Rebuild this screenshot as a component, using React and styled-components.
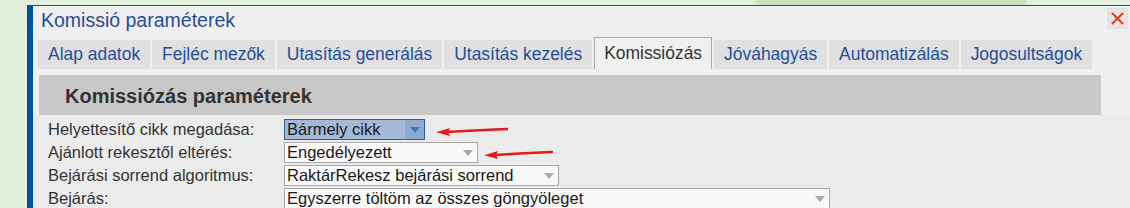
import React from 'react'
import styled, { createGlobalStyle } from 'styled-components'

const GlobalStyle = createGlobalStyle`
  html, body {
    margin: 0;
    padding: 0;
    height: 208px;
    overflow: hidden;
    background: linear-gradient(
      to right,
      #e3efdc 0,
      #e3efdc 752px,
      #c9e2c0 758px,
      #c9e2c0 1025px,
      #e3efdc 1027px
    );
    font-family: Arial, "Liberation Sans", sans-serif;
  }
`

const Page = styled.div`
  padding: 5px 0 0 27px;
  height: 208px;
  box-sizing: border-box;
`

const Window = styled.div`
  box-sizing: border-box;
  height: 100%;
  border-top: 1px solid #1b4f8d;
  border-left: 6px solid #0050a0;
  background: #efefef;
  display: flex;
  flex-direction: column;
  overflow: hidden;
`

const TitleBar = styled.div`
  flex: none;
  display: flex;
  justify-content: space-between;
  align-items: flex-start;
  height: 29px;
  padding: 2px 2px 0 8px;
`

const Title = styled.div`
  font-size: 19.5px;
  line-height: 24px;
  color: #1f4e9a;
`

const CloseButton = styled.div`
  width: 21px;
  height: 21px;
  background: #e3e3e3;
  display: flex;
  align-items: center;
  justify-content: center;
`

const Tabs = styled.div`
  flex: none;
  display: flex;
  align-items: flex-end;
  gap: 2px;
  padding-left: 5px;
  height: 32px;
`

const Tab = styled.div`
  box-sizing: border-box;
  height: ${p => (p.$active ? '32px' : '29px')};
  padding: 0 ${p => (p.$active ? '9px' : '10px')};
  font-size: 17.45px;
  line-height: ${p => (p.$active ? '30px' : '29px')};
  white-space: nowrap;
  color: ${p => (p.$active ? '#333' : '#1f4f9d')};
  background: ${p => (p.$active ? '#f0f0f0' : '#e0e0e0')};
  border: ${p => (p.$active ? '1px solid #aaa' : 'none')};
  border-bottom: none;
`

const SectionHeader = styled.div`
  flex: none;
  margin: 6px 29px 0 6px;
  height: 40px;
  background: #c8c8c8;
  padding-left: 26px;
  font-size: 20px;
  font-weight: bold;
  line-height: 42px;
  color: #333;
`

const Content = styled.div`
  flex: 1 0 auto;
  background: #ebebeb;
  padding: 4px 0 0 15px;
  display: grid;
  grid-template-columns: 236px 1fr;
  grid-auto-rows: 21px;
  row-gap: 2px;
`

const Label = styled.div`
  font-size: 16.5px;
  line-height: 21px;
  color: #333;
  white-space: nowrap;
`

const Field = styled.div`
  display: flex;
  align-items: center;
`

const Select = styled.div`
  box-sizing: border-box;
  width: ${p => p.$width}px;
  height: 21px;
  display: flex;
  align-items: stretch;
  border: 1px solid ${p => (p.$focused ? '#2e5f9a' : '#a9a9a9')};
  background: ${p => (p.$focused ? '#a3b9d6' : '#f8f8f8')};
`

const SelectText = styled.div`
  flex: 1;
  padding-left: 2px;
  font-size: 16.5px;
  line-height: 19px;
  color: #1a1a1a;
  white-space: nowrap;
  overflow: hidden;
`

const Caret = styled.div`
  width: 19px;
  display: flex;
  align-items: center;
  justify-content: center;
  background: ${p => (p.$focused ? '#8eaad0' : 'transparent')};
`

const Annotation = styled.svg`
  margin-left: ${p => p.$gap}px;
  margin-top: 2px;
  flex: none;
`

const RedArrow = ({ gap, length }) => (
  <Annotation $gap={gap} width={length} height="12" viewBox={`0 0 ${length} 12`}>
    <path d={`M11 7 Q ${length / 2} 5.5 ${length - 1} 4`} stroke="#e31b1b" strokeWidth="2.6" fill="none" strokeLinecap="round" />
    <polygon points="0,7.2 14,3 12,7 14,11" fill="#e31b1b" />
  </Annotation>
)

const SelectBox = ({ width, value, focused }) => (
  <Select $width={width} $focused={focused}>
    <SelectText>{value}</SelectText>
    <Caret $focused={focused}>
      <svg width="10" height="6" viewBox="0 0 10 6">
        <polygon points="0,0 10,0 5,6" fill={focused ? '#3b79c0' : '#aaa'} />
      </svg>
    </Caret>
  </Select>
)

const tabs = [
  'Alap adatok',
  'Fejléc mezők',
  'Utasítás generálás',
  'Utasítás kezelés',
  'Komissiózás',
  'Jóváhagyás',
  'Automatizálás',
  'Jogosultságok',
]

const rows = [
  { label: 'Helyettesítő cikk megadása:', value: 'Bármely cikk', width: 141, focused: true, arrow: { gap: 11, length: 72 } },
  { label: 'Ajánlott rekesztől eltérés:', value: 'Engedélyezett', width: 194, arrow: { gap: 6, length: 69 } },
  { label: 'Bejárási sorrend algoritmus:', value: 'RaktárRekesz bejárási sorrend', width: 275 },
  { label: 'Bejárás:', value: 'Egyszerre töltöm az összes göngyöleget', width: 546 },
]

const App = () => {
  return (
    <>
      <GlobalStyle />
      <Page>
        <Window>
          <TitleBar>
            <Title>Komissió paraméterek</Title>
            <CloseButton>
              <svg width="13" height="13" viewBox="0 0 13 13">
                <path d="M1 1 L12 12 M12 1 L1 12" stroke="#d4432b" strokeWidth="2" />
              </svg>
            </CloseButton>
          </TitleBar>
          <Tabs>
            {tabs.map(t => (
              <Tab key={t} $active={t === 'Komissiózás'}>{t}</Tab>
            ))}
          </Tabs>
          <SectionHeader>Komissiózás paraméterek</SectionHeader>
          <Content>
            {rows.map(r => (
              <React.Fragment key={r.label}>
                <Label>{r.label}</Label>
                <Field>
                  <SelectBox width={r.width} value={r.value} focused={r.focused} />
                  {r.arrow && <RedArrow gap={r.arrow.gap} length={r.arrow.length} />}
                </Field>
              </React.Fragment>
            ))}
          </Content>
        </Window>
      </Page>
    </>
  )
}

export default App
